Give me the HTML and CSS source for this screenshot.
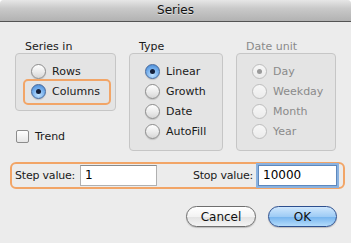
FILE: index.html
```html
<!DOCTYPE html>
<html lang="en">
<head>
  <meta charset="UTF-8" />
  <meta name="viewport" content="width=device-width, initial-scale=1.0" />
  <title>Series</title>
  <link rel="stylesheet" href="styles.css">
</head>
<body>
  <div class="window">
    <div class="titlebar">Series</div>

    <div class="content">
      <div class="groups">
        <!-- Series in -->
        <div class="group">
          <div class="group-label">Series in</div>
          <div class="box series-box">
            <label class="opt"><span class="radio"></span>Rows</label>
            <label class="opt marked"><span class="radio on"></span>Columns</label>
          </div>
          <label class="trend"><span class="check"></span>Trend</label>
        </div>

        <!-- Type -->
        <div class="group">
          <div class="group-label">Type</div>
          <div class="box">
            <label class="opt"><span class="radio on"></span>Linear</label>
            <label class="opt"><span class="radio"></span>Growth</label>
            <label class="opt"><span class="radio"></span>Date</label>
            <label class="opt"><span class="radio"></span>AutoFill</label>
          </div>
        </div>

        <!-- Date unit (disabled) -->
        <div class="group disabled">
          <div class="group-label">Date unit</div>
          <div class="box">
            <label class="opt"><span class="radio on"></span>Day</label>
            <label class="opt"><span class="radio"></span>Weekday</label>
            <label class="opt"><span class="radio"></span>Month</label>
            <label class="opt"><span class="radio"></span>Year</label>
          </div>
        </div>
      </div>

      <div class="values">
        <span class="val-label">Step value:</span>
        <span class="field step">1</span>
        <span class="spacer"></span>
        <span class="val-label">Stop value:</span>
        <span class="field stop focus">10000</span>
      </div>

      <div class="buttons">
        <button class="btn">Cancel</button>
        <button class="btn default">OK</button>
      </div>
    </div>
  </div>
</body>
</html>
```

FILE: styles.css
```css
body {
  margin: 0;
  padding: 0;
  background: #ffffff;
  font-family: "DejaVu Sans", sans-serif;
  font-size: 11px;
  color: #1a1a1a;
}
.window {
  width: 351px;
  height: 243px;
  background: #ececec;
  border-top-left-radius: 4px;
  border-top-right-radius: 4px;
  overflow: hidden;
}
/* title bar */
.titlebar {
  height: 21px;
  line-height: 21px;
  text-align: center;
  font-size: 12px;
  color: #111;
  text-shadow: 0 1px 0 rgba(255, 255, 255, 0.5);
  background: linear-gradient(#e6e6e6, #c9c9c9 40%, #b2b2b2);
  border-bottom: 1px solid #545454;
}
.content {
  padding: 18px 0 0 15px;
}
.groups {
  display: grid;
  grid-template-columns: 101px 94px 100px;
  column-gap: 13px;
  align-items: start;
}
.group-label {
  height: 13px;
  line-height: 13px;
  padding-left: 10px;
}
.box {
  background: #e4e4e4;
  border: 1px solid #c6c6c6;
  border-radius: 4px;
  padding: 7px 0 9px 15px;
}
.opt {
  position: relative;
  display: flex;
  align-items: center;
  height: 20px;
}
.opt.marked::before {
  content: "";
  position: absolute;
  left: -8px;
  right: 4px;
  top: -2px;
  bottom: -4px;
  border: 2px solid #f2a567;
  border-radius: 5px;
}
.radio {
  position: relative;
  width: 13px;
  height: 13px;
  margin-right: 6px;
  border: 1px solid #8c8c8c;
  border-radius: 50%;
  background: linear-gradient(#ffffff, #e8e8e8 60%, #d6d6d6);
  box-shadow: 0 1px 1px rgba(0, 0, 0, 0.15);
  flex: none;
}
.radio.on {
  border-color: #46699c;
  background: radial-gradient(circle at 50% 75%, #c3e3ff, #72acea 55%, #3f83d2);
}
.radio.on::after {
  content: "";
  position: absolute;
  left: 4px;
  top: 4px;
  width: 5px;
  height: 5px;
  border-radius: 50%;
  background: #15203a;
}
.group.disabled {
  color: #8a8a8a;
}
.group.disabled .radio {
  border-color: #bdbdbd;
  background: linear-gradient(#f7f7f7, #ebebeb);
  box-shadow: none;
}
.group.disabled .radio.on::after {
  background: #9a9a9a;
}
.trend {
  display: flex;
  align-items: center;
  height: 14px;
  margin-top: 18px;
  padding-left: 1px;
}
.check {
  width: 11px;
  height: 11px;
  margin-right: 6px;
  border: 1px solid #8c8c8c;
  border-radius: 2px;
  background: linear-gradient(#ffffff, #e6e6e6);
}
/* step / stop row */
.values {
  display: flex;
  align-items: center;
  width: 328px;
  height: 23px;
  margin: 11px 0 0 -5px;
  padding: 0 0 0 3px;
  border: 2px solid #f2a567;
  border-radius: 6px;
  box-sizing: content-box;
}
.val-label {
  white-space: nowrap;
  letter-spacing: -0.2px;
}
.field {
  height: 19px;
  line-height: 19px;
  padding-left: 4px;
  margin-left: 5px;
  background: #fff;
  border: 1px solid #b0b0b0;
  border-top-color: #8a8a8a;
  font-size: 12px;
  color: #000;
}
.field.step {
  width: 71px;
}
.field.stop {
  width: 73px;
  margin-right: 6px;
}
.field.focus {
  border-color: #5e88bd;
  box-shadow: 0 0 0 2px #8ab2e0;
}
.spacer {
  flex: 1;
}
/* buttons */
.buttons {
  display: flex;
  justify-content: flex-end;
  gap: 12px;
  margin-top: 17px;
  padding-right: 14px;
}
.btn {
  height: 21px;
  border-radius: 11px;
  border: 1px solid #6f6f6f;
  font-family: "DejaVu Sans", sans-serif;
  font-size: 12px;
  color: #111;
  background: linear-gradient(#ffffff, #f3f3f3 50%, #e2e2e2 51%, #f4f4f4);
  padding: 0;
  box-shadow: 0 1px 1px rgba(0, 0, 0, 0.2);
}
.btn:first-child {
  width: 70px;
}
.btn.default {
  width: 69px;
  border-color: #2d4f8e;
  background: linear-gradient(#cfe7fd, #9fccf5 50%, #74b3ee 51%, #b4dcfb);
}
```
